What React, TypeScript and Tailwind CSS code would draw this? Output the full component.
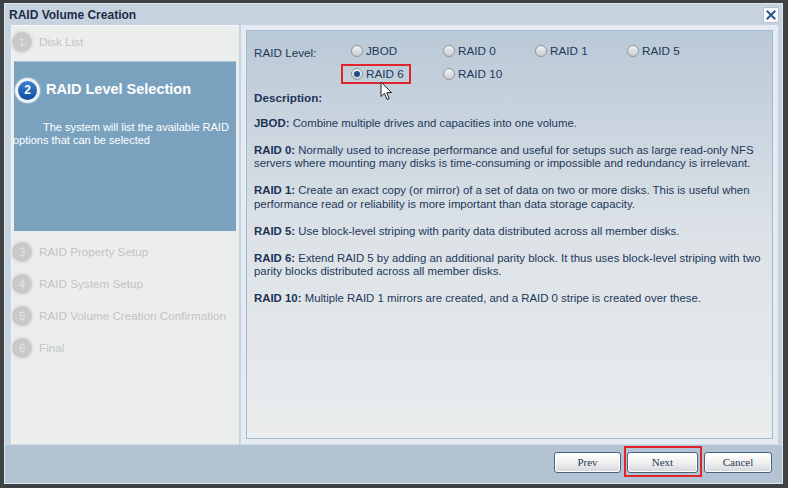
import React from "react"

const font = { fontFamily: '"Liberation Sans", Arial, sans-serif' }

const steps = [
  { n: 1, label: "Disk List" },
  { n: 3, label: "RAID Property Setup" },
  { n: 4, label: "RAID System Setup" },
  { n: 5, label: "RAID Volume Creation Confirmation" },
  { n: 6, label: "Final" },
]

const levels = [
  { label: "JBOD", checked: false },
  { label: "RAID 0", checked: false },
  { label: "RAID 1", checked: false },
  { label: "RAID 5", checked: false },
  { label: "RAID 6", checked: true },
  { label: "RAID 10", checked: false },
]

const descriptions = [
  { key: "JBOD:", text: "Combine multiple drives and capacities into one volume." },
  {
    key: "RAID 0:",
    text: "Normally used to increase performance and useful for setups such as large read-only NFS servers where mounting many disks is time-consuming or impossible and redundancy is irrelevant.",
  },
  {
    key: "RAID 1:",
    text: "Create an exact copy (or mirror) of a set of data on two or more disks. This is useful when performance read or reliability is more important than data storage capacity.",
  },
  { key: "RAID 5:", text: "Use block-level striping with parity data distributed across all member disks." },
  {
    key: "RAID 6:",
    text: "Extend RAID 5 by adding an additional parity block. It thus uses block-level striping with two parity blocks distributed across all member disks.",
  },
  { key: "RAID 10:", text: "Multiple RAID 1 mirrors are created, and a RAID 0 stripe is created over these." },
]

const StepRow = ({ n, label }: { n: number; label: string }) => (
  <div className="h-[32px] flex items-center -ml-[2px]">
    <div className="w-[20px] h-[20px] shrink-0 rounded-full bg-[#c9c9c9] shadow-[0_0_2px_2px_#e2e2e2] flex items-center justify-center text-[11px] text-[#e4e4e4]">
      {n}
    </div>
    <span className="ml-[7px] text-[11.7px] whitespace-nowrap text-[#c2c4c4]">{label}</span>
  </div>
)

const Radio = ({ checked }: { checked: boolean }) => (
  <span className="w-[12px] h-[12px] rounded-full border border-[#8f969c] bg-gradient-to-b from-[#f4f4f4] to-[#c9cdd0] flex items-center justify-center">
    {checked && <span className="w-[6px] h-[6px] rounded-full bg-[#1d4f86]" />}
  </span>
)

const Cursor = () => (
  <svg width="13" height="20" viewBox="0 0 13 20" className="absolute left-[133px] top-[50px]">
    <path
      d="M1 1 L1 15.5 L4.5 12.3 L7 18.5 L9.2 17.6 L6.8 11.6 L11.5 11.6 Z"
      fill="#ffffff"
      stroke="#222"
      strokeWidth="1"
      strokeLinejoin="round"
    />
  </svg>
)

const Button = ({ label, w }: { label: string; w: string }) => (
  <button
    className={`${w} h-[21px] rounded-[3px] border border-[#4d647e] bg-gradient-to-b from-[#ffffff] via-[#f0f0f0] to-[#d4d7da] text-[11px] text-[#283a56] shadow-[inset_0_0_0_1px_#ffffff]`}
    style={{ fontFamily: '"Liberation Serif", "Times New Roman", serif' }}
  >
    {label}
  </button>
)

export default function App() {
  return (
    <div className="w-[788px] h-[488px] bg-[#3f4245] pt-[3px] pl-[4px] pr-[5px] pb-[4px]" style={font}>
      <div className="w-full h-full bg-[#c6d2de] border border-[#dfe6ed] flex flex-col">
        {/* Title bar */}
        <div className="h-[21px] flex items-center justify-between pl-[4px] pr-[3px] shrink-0">
          <span className="text-[12px] font-bold text-[#1c2d48]">RAID Volume Creation</span>
          <span className="w-[16px] h-[16px] bg-[#f6f8fb] border border-[#b6c4d3] flex items-center justify-center">
            <svg width="10" height="10" viewBox="0 0 10 10">
              <path d="M1.5 1.5 L8.5 8.5 M8.5 1.5 L1.5 8.5" stroke="#34558a" strokeWidth="2" strokeLinecap="square" />
            </svg>
          </span>
        </div>

        {/* Body */}
        <div className="h-[419px] flex pl-[6px] pr-[4px] shrink-0">
          {/* Left step list */}
          <div className="w-[228px] h-full bg-[#eceeed] border-l border-t border-[#f6f8f9] pl-[2px] pr-[3px]">
            <StepRow {...steps[0]} />
            <div className="mt-[3px] mb-[5px] h-[170px] bg-[#7aa2bf] border-t border-[#a8c3d7]">
              <div className="flex items-center h-[56px] pl-[1px]">
                <div className="w-[25px] h-[25px] rounded-full bg-[#eef2f6] flex items-center justify-center shadow-[0_0_1px_1px_#9db9cf]">
                  <div className="w-[19px] h-[19px] rounded-full bg-gradient-to-b from-[#3d80cf] to-[#0f4d9c] flex items-center justify-center text-[12px] font-bold text-white">
                    2
                  </div>
                </div>
                <span className="ml-[6px] text-[14.5px] font-bold text-white">RAID Level Selection</span>
              </div>
              <p className="mt-[3px] text-[11px] leading-[13px] text-white indent-[30px] -ml-[1px] pr-[2px]">
                The system will list the available RAID options that can be selected
              </p>
            </div>
            {steps.slice(1).map((s) => (
              <StepRow key={s.n} {...s} />
            ))}
          </div>

          {/* Right content */}
          <div className="ml-[2px] w-[537px] h-full bg-[#e4ebf2] p-[5px]">
            <div className="relative w-full h-full border border-[#a7bacb] bg-gradient-to-b from-[#bac9d7] via-[#dce2e7] to-[#eaeced] pl-[7px] pt-[11px] text-[#22385a]">
              <div className="flex">
                <span className="w-[97px] text-[11.7px] pt-[2px]">RAID Level:</span>
                <div className="grid grid-cols-[92px_92px_92px_92px] gap-y-[6px]">
                  {levels.map((l) => (
                    <label key={l.label} className="h-[17px] flex items-center gap-[3px] text-[11.7px]">
                      <Radio checked={l.checked} />
                      {l.label}
                    </label>
                  ))}
                </div>
              </div>
              {/* highlight around RAID 6 */}
              <div className="absolute left-[94px] top-[33px] w-[70px] h-[20px] border-2 border-[#e0242c]" />
              <Cursor />

              <div className="mt-[7px] text-[11.7px] font-bold text-[#1e3556]">Description:</div>
              <div className="mt-[10px] flex flex-col gap-[13.5px] pr-[2px]">
                {descriptions.map((d) => (
                  <p key={d.key} className="text-[11.4px] leading-[13.5px]">
                    <span className="font-bold text-[#1b3254]">{d.key}</span> {d.text}
                  </p>
                ))}
              </div>
            </div>
          </div>
        </div>

        {/* Footer */}
        <div className="relative flex-1 bg-[#b3c3d3] border-t border-[#d3dde7] flex items-start justify-end gap-[6px] pr-[10px] pt-[7px]">
          <Button label="Prev" w="w-[67px]" />
          <Button label="Next" w="w-[71px]" />
          <Button label="Cancel" w="w-[68px]" />
          {/* highlight around Next */}
          <div className="absolute right-[80px] top-[1px] w-[78px] h-[31px] border-2 border-[#e0242c]" />
        </div>
      </div>
    </div>
  )
}
